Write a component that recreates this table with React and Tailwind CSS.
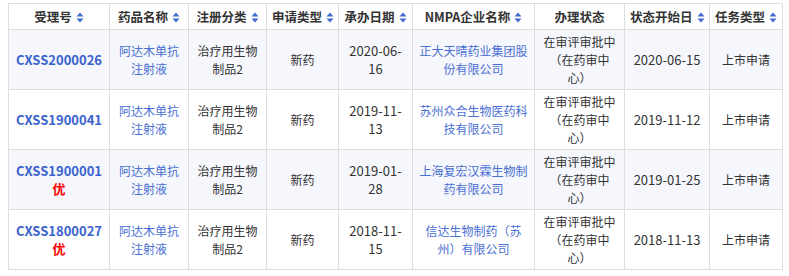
import React from "react";

function SortIcon() {
  return (
    <svg width="8" height="11" viewBox="0 0 8 11" className="inline-block ml-[4px] align-[-1px]">
      <polygon points="4,0.5 7.5,4.5 0.5,4.5" fill="#3f6ad2" />
      <polygon points="0.5,6.5 7.5,6.5 4,10.5" fill="#3f6ad2" />
    </svg>
  );
}

const headers = [
  ["受理号", true],
  ["药品名称", true],
  ["注册分类", true],
  ["申请类型", true],
  ["承办日期", true],
  ["NMPA企业名称", true],
  ["办理状态", false],
  ["状态开始日", true],
  ["任务类型", true],
];

const rows = [
  {
    id: "CXSS2000026",
    you: false,
    date: "2020-06-16",
    company: "正大天晴药业集团股份有限公司",
    start: "2020-06-15",
  },
  {
    id: "CXSS1900041",
    you: false,
    date: "2019-11-13",
    company: "苏州众合生物医药科技有限公司",
    start: "2019-11-12",
  },
  {
    id: "CXSS1900001",
    you: true,
    date: "2019-01-28",
    company: "上海复宏汉霖生物制药有限公司",
    start: "2019-01-25",
  },
  {
    id: "CXSS1800027",
    you: true,
    date: "2018-11-15",
    company: "信达生物制药（苏州）有限公司",
    start: "2018-11-13",
  },
];

const widths = [101, 79, 78, 72, 74, 122, 90, 85, 73];

export default function App() {
  const td = "border border-[#dddddd] px-[5px] text-center align-middle";
  return (
    <div
      className="bg-white w-[789px] h-[276px] pt-[3px] pl-[8px] text-[12px] leading-[18px] text-[#333333] [text-spacing-trim:space-all]"
      style={{ fontFamily: '"Noto Sans CJK SC", "Noto Sans", sans-serif' }}
    >
      <table className="table-fixed border-collapse w-[775px]">
        <colgroup>
          {widths.map((w, i) => (
            <col key={i} style={{ width: w }} />
          ))}
        </colgroup>
        <thead>
          <tr className="h-[26px] bg-white">
            {headers.map(([h, s]) => (
              <th key={h} className={`${td} text-[12.5px] font-bold whitespace-nowrap text-[#333333]`}>
                {h}
                {s && <SortIcon />}
              </th>
            ))}
          </tr>
        </thead>
        <tbody>
          {rows.map((r, i) => (
            <tr key={r.id} className={`h-[60px] ${i % 2 === 0 ? "bg-[#f5f7fc]" : "bg-white"}`}>
              <td className={td}>
                <div className="text-[13px] font-bold text-[#3a62cc]">{r.id}</div>
                {r.you && <div className="text-[13px] font-bold text-[#ff0000]">优</div>}
              </td>
              <td className={`${td} text-[#4a6fd2]`}>阿达木单抗注射液</td>
              <td className={td}>治疗用生物制品2</td>
              <td className={td}>新药</td>
              <td className={`${td} text-[13px]`}>{r.date}</td>
              <td className={`${td} text-[#4a6fd2]`}>{r.company}</td>
              <td className={td}>在审评审批中（在药审中心）</td>
              <td className={`${td} text-[13px]`}>{r.start}</td>
              <td className={td}>上市申请</td>
            </tr>
          ))}
        </tbody>
      </table>
    </div>
  );
}
